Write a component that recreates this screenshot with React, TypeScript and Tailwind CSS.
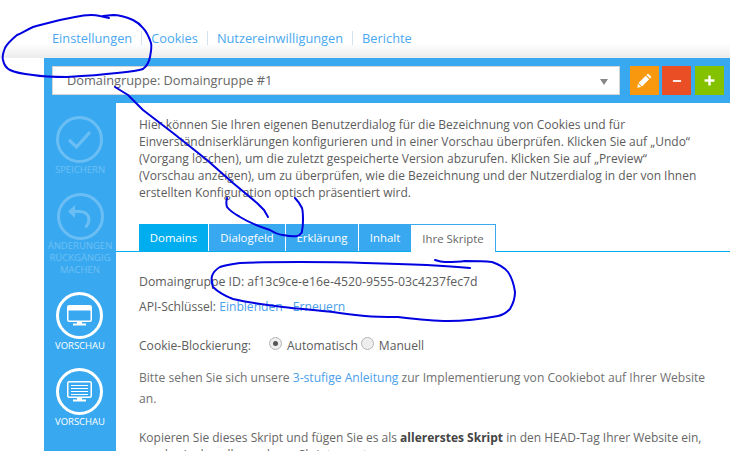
import { Minus, Plus } from 'lucide-react';

const navItems = ['Einstellungen', 'Cookies', 'Nutzereinwilligungen', 'Berichte'];

const tabs = [
  { label: 'Domains', cls: 'w-[69px] bg-[#00aeef] text-white' },
  { label: 'Dialogfeld', cls: 'w-[76px] bg-[#38a9f0] text-white' },
  { label: 'Erklärung', cls: 'w-[72px] bg-[#38a9f0] text-white' },
  { label: 'Inhalt', cls: 'w-[52px] bg-[#38a9f0] text-white' },
];

function MonitorIcon({ lines }: { lines?: boolean }) {
  return (
    <svg width="25" height="21" viewBox="0 0 25 21" fill="none">
      <rect x="0.75" y="0.75" width="23.5" height="15.5" rx="1.5" stroke="white" strokeWidth="1.5" />
      {lines ? (
        <path d="M4 4.5h17M4 7.5h17M4 10.5h17M4 13.5h17" stroke="white" strokeWidth="1" />
      ) : (
        <rect x="1" y="1" width="23" height="4.5" fill="white" />
      )}
      <path d="M10 17h5v1.5h4V20.5H6V18.5h4z" fill="white" />
    </svg>
  );
}

function PencilIcon() {
  return (
    <svg width="15" height="15" viewBox="0 0 15 15" fill="white">
      <path d="M11 0.5 L14.5 4 L13 5.5 L9.5 2 Z" />
      <path d="M8.7 2.8 L12.2 6.3 L5 13.5 L1.5 10 Z" />
      <path d="M1 10.8 L4.2 14 L0.3 14.8 Z" />
    </svg>
  );
}

function UndoIcon() {
  return (
    <svg width="26" height="26" viewBox="0 0 26 26" fill="none">
      <path d="M1 7.5 L8 1 V14 Z" fill="white" />
      <path d="M7 7.5 H13 C18.5 7.5 22 11 22 15.5 C22 18.5 20.5 21 18.5 23.5" stroke="white" strokeWidth="3" />
    </svg>
  );
}

function CheckIcon() {
  return (
    <svg width="25" height="20" viewBox="0 0 25 20" fill="none">
      <path d="M2 10 L9.5 17 L23 2" stroke="white" strokeWidth="3.2" />
    </svg>
  );
}

// Handschriftliche Markierungen ueber dem Screenshot
function Scribbles() {
  return (
    <svg className="absolute inset-0 pointer-events-none" width="730" height="459" fill="none" stroke="#0000e0" strokeWidth="2" strokeLinecap="round" strokeLinejoin="round">
      <path d="M109 18 L100 16 C92 14 84 15 75 17 L60 20 C48 23 40 25 33 27 C26 30 22 33 17 35 C11 40 7 44 5 48 C3 53 2 57 3 60 C4 65 6 68 10 70 C16 73 24 74 33 75 C45 77 55 77 67 77 C85 76 100 75 117 73 C128 72 138 71 143 69 C147 66 149 62 150 57 C151 52 152 47 151 43 C149 37 147 32 143 28 C140 24 137 22 133 20 C126 17 119 15 113 15 L103 16" />
      <path d="M115 87 L128 95 L143 110 L173 133 L207 160 L233 183 L257 203 L264 210 L268 217" />
      <path d="M227 198 C226 202 226 204 227 207 C231 212 235 214 240 217 C250 223 260 227 270 230 C275 233 279 235 283 235 C288 236 293 237 297 236 C300 235 302 233 302 231 C303 227 303 224 303 220 C303 215 303 211 302 208 C300 204 298 201 295 198" />
      <path d="M470 268 C450 266 410 264 365 263 C340 262 320 262 300 262 C280 262 260 262 240 263 C232 264 225 265 220 267 C215 270 213 273 212 276 C211 280 212 284 213 287 C218 292 225 296 233 299 C250 303 266 305 283 307 C300 309 316 310 333 312 C345 314 355 315 365 316 C376 317 387 317 398 317 C415 319 432 321 448 321 C465 321 482 319 498 316 C503 315 507 312 510 309 C513 304 515 298 515 292 C514 285 512 278 508 272 C504 267 498 264 492 262 C483 261 474 261 465 261 C458 262 451 262 445 262 C441 262 438 261 435 260" />
    </svg>
  );
}

export default function App() {
  return (
    <div className="relative w-[730px] h-[459px] overflow-hidden bg-white font-['Open_Sans',sans-serif] text-[12px] text-[#5c5c5c]">
      {/* Navigation oben */}
      <div className="h-[58px] pl-[44px] bg-gradient-to-b from-white from-[75%] to-[#ececec]">
        <div className="flex items-center pt-[31px] pl-[8px] text-[12.8px] leading-[18px] text-[#4aa8f0]">
          {navItems.map((item, i) => (
            <span key={item} className={i > 0 ? 'border-l border-[#d5e3ee] ml-[9px] pl-[9px] leading-[14px]' : 'leading-[14px]'}>
              {item}
            </span>
          ))}
        </div>
      </div>

      <div className="ml-[44px] h-[393px] flex flex-col overflow-hidden">
        {/* Domaingruppe Auswahl */}
        <div className="h-[45px] shrink-0 bg-[#38a9f0] pt-[8px] pl-[8px] flex items-start">
          <div className="w-[568px] h-[29px] bg-white border border-[#d4d4d4] flex items-center justify-between pl-[14px] pr-[11px] text-[12.8px] text-[#666]">
            <span>Domaingruppe: Domaingruppe #1</span>
            <span className="w-0 h-0 border-x-[4px] border-x-transparent border-t-[6px] border-t-[#888] mt-[2px]" />
          </div>
          <div className="w-[29px] h-[29px] ml-[10px] bg-[#f7980f] flex items-center justify-center">
            <PencilIcon />
          </div>
          <div className="w-[29px] h-[29px] ml-[3px] bg-[#e94e24] flex items-center justify-center">
            <Minus size={14} color="white" strokeWidth={3} strokeLinecap="butt" />
          </div>
          <div className="w-[29px] h-[29px] ml-[4px] bg-[#84c200] flex items-center justify-center">
            <Plus size={17} color="white" strokeWidth={3.4} strokeLinecap="butt" />
          </div>
        </div>

        <div className="flex flex-1 min-h-0">
          {/* Seitenleiste */}
          <div className="w-[72px] shrink-0 bg-[#38a9f0] flex flex-col items-center pt-[13px] text-white text-[9.5px] leading-[12px] text-center">
            <div className="flex flex-col items-center opacity-25">
              <div className="w-[47px] h-[47px] rounded-full border-[3px] border-white flex items-center justify-center">
                <CheckIcon />
              </div>
              <div className="mt-[1px]">SPEICHERN</div>
            </div>
            <div className="flex flex-col items-center opacity-25 mt-[17px]">
              <div className="w-[47px] h-[47px] rounded-full border-[3px] border-white flex items-center justify-center">
                <UndoIcon />
              </div>
              <div>ÄNDERUNGEN<br />RÜCKGÄNGIG<br />MACHEN</div>
            </div>
            <div className="flex flex-col items-center mt-[16px]">
              <div className="w-[47px] h-[47px] rounded-full border-[3px] border-white flex items-center justify-center">
                <MonitorIcon />
              </div>
              <div className="mt-[1px]">VORSCHAU</div>
            </div>
            <div className="flex flex-col items-center mt-[16px]">
              <div className="w-[47px] h-[47px] rounded-full border-[3px] border-white flex items-center justify-center">
                <MonitorIcon lines />
              </div>
              <div className="mt-[1px]">VORSCHAU</div>
            </div>
          </div>

          {/* Inhalt */}
          <div className="flex-1 min-w-0 overflow-hidden pt-[13px]">
            <p className="pl-[23px] pr-[10px] leading-[17px] w-[610px]">
              Hier können Sie Ihren eigenen Benutzerdialog für die Bezeichnung von Cookies und für
              <br />Einverständniserklärungen konfigurieren und in einer Vorschau überprüfen. Klicken Sie auf „Undo“
              <br />(Vorgang löschen), um die zuletzt gespeicherte Version abzurufen. Klicken Sie auf „Preview“
              <br />(Vorschau anzeigen), um zu überprüfen, wie die Bezeichnung und der Nutzerdialog in der von Ihnen
              <br />erstellten Konfiguration optisch präsentiert wird.
            </p>

            <div className="mt-[23px] h-[28px] pl-[23px] flex border-b border-[#00aeef] text-[11.4px]">
              {tabs.map((t) => (
                <div key={t.label} className={`${t.cls} h-[27px] mr-px flex items-center justify-center`}>
                  {t.label}
                </div>
              ))}
              <div className="w-[85px] h-[28px] -ml-px bg-white border-t border-r border-[#38a9f0] flex items-center justify-center text-[#666]">
                Ihre Skripte
              </div>
            </div>

            <div className="pl-[23px] pt-[21px] text-[12.1px]">
              <div className="leading-[17px] text-[12.3px]">Domaingruppe ID: af13c9ce-e16e-4520-9555-03c4237fec7d</div>
              <div className="leading-[17px] mt-[8px]">
                API-Schlüssel: <span className="text-[#4aa0ea]">Einblenden - Erneuern</span>
              </div>
              <div className="flex items-center leading-[17px] mt-[22px]">
                <span>Cookie-Blockierung:</span>
                <span className="w-[13px] h-[13px] ml-[18px] -translate-y-[2px] rounded-full border border-[#b5b5b5] bg-[#eee] flex items-center justify-center">
                  <span className="w-[5px] h-[5px] rounded-full bg-[#555]" />
                </span>
                <span className="ml-[5px]">Automatisch</span>
                <span className="w-[13px] h-[13px] ml-[3px] -translate-y-[2px] rounded-full border border-[#b5b5b5] bg-[#eee]" />
                <span className="ml-[5px]">Manuell</span>
              </div>
              <p className="mt-[13px] leading-[21px] w-[580px] text-[#707070]">
                Bitte sehen Sie sich unsere <span className="text-[#4aa0ea]">3-stufige Anleitung</span> zur Implementierung von Cookiebot auf Ihrer Website an.
              </p>
              <p className="mt-[20px] leading-[17px] whitespace-nowrap text-[12px] text-[#666]">
                Kopieren Sie dieses Skript und fügen Sie es als <b className="text-[#444]">allererstes Skript</b> in den HEAD-Tag Ihrer Website ein,
                <br />um das Laden aller anderen Skripte zu steuern.
              </p>
            </div>
          </div>
        </div>
      </div>

      <Scribbles />
    </div>
  );
}
